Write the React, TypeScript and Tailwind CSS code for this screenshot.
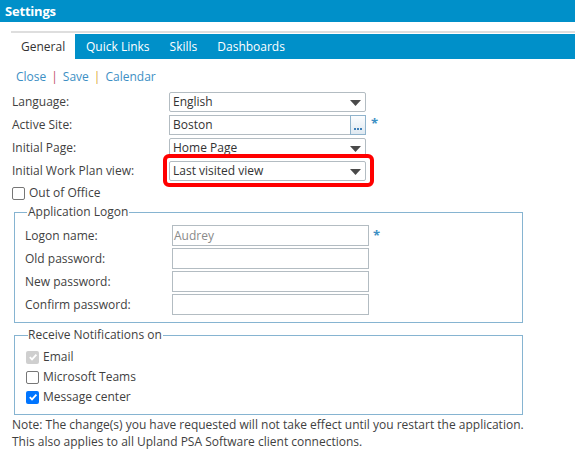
import React from "react";

const font = { fontFamily: '"Open Sans", "Noto Sans", sans-serif' };

function Arrow() {
  return (
    <svg width="11" height="6" viewBox="0 0 11 6" className="absolute right-[4px] top-[7px]">
      <polygon points="0,0 11,0 5.5,6" fill="#4a4a4a" />
    </svg>
  );
}

function Select({ value }: { value: string }) {
  return (
    <div className="relative w-[197px] h-[20px] border border-[#b3bcc2] rounded-[2px] bg-white pl-[3px] text-[12px] leading-[18px] text-[#333]">
      {value}
      <Arrow />
    </div>
  );
}

function TextBox({ value, gray }: { value?: string; gray?: boolean }) {
  return (
    <div className={`w-[197px] h-[21px] border border-[#b3bcc2] bg-white pl-[1px] text-[12px] leading-[19px] ${gray ? "text-[#8a8a8a]" : "text-[#333]"}`}>
      {value}
    </div>
  );
}

function Row({ label, children, labelW = 157 }: { label: string; children: React.ReactNode; labelW?: number }) {
  return (
    <div className="flex items-center">
      <div className="text-[12px] text-[#3f3f3f] shrink-0" style={{ width: labelW }}>
        {label}
      </div>
      {children}
    </div>
  );
}

function Box({ state }: { state: "off" | "on" | "disabled" }) {
  if (state === "off")
    return <span className="inline-block w-[13px] h-[13px] border border-[#767676] rounded-[2px] bg-white shrink-0" />;
  return (
    <span
      className={`inline-flex items-center justify-center w-[13px] h-[13px] rounded-[2px] shrink-0 ${
        state === "on" ? "bg-[#0075ff]" : "bg-[#cfcfcf]"
      }`}
    >
      <svg width="10" height="10" viewBox="0 0 10 10">
        <path d="M1.8 5.2 L4 7.4 L8.4 2.6" stroke="white" strokeWidth="1.8" fill="none" />
      </svg>
    </span>
  );
}

function Check({ state, label }: { state: "off" | "on" | "disabled"; label: string }) {
  return (
    <div className="flex items-center gap-[4px] h-[20px]">
      <Box state={state} />
      <span className="text-[12px] text-[#3f3f3f]">{label}</span>
    </div>
  );
}

export default function App() {
  return (
    <div className="w-[575px] h-[452px] bg-white relative overflow-hidden" style={font}>
      <div className="h-[22px] bg-[#0090c9] text-white font-bold text-[13px] leading-[22px] pl-[5px] tracking-[-0.2px]">
        Settings
      </div>
      <div className="mt-[9px] ml-[11px] h-[2px] bg-[#dedede]" />
      <div className="mt-[1px] flex h-[25px] ml-[11px]">
        <div className="w-[64px] bg-white text-[#333] text-[12px] leading-[25px] pl-[10px]">General</div>
        <div className="flex-1 bg-[#0090c9] flex text-white text-[12px] leading-[25px]">
          <span className="ml-[11px]">Quick Links</span>
          <span className="ml-[20px]">Skills</span>
          <span className="ml-[20px]">Dashboards</span>
        </div>
      </div>
      <div className="mt-[9px] ml-[16px] flex items-center gap-[5px] text-[12px] leading-[17px]">
        <span className="text-[#3d8fc4]">Close</span>
        <span className="text-[#c0506a]">|</span>
        <span className="text-[#3d8fc4]">Save</span>
        <span className="text-[#d9a43a]">|</span>
        <span className="text-[#3d8fc4]">Calendar</span>
      </div>
      <div className="ml-[12px] mt-[7px] flex flex-col gap-[3px]">
        <Row label="Language:">
          <Select value="English" />
        </Row>
        <Row label="Active Site:">
          <div className="flex items-center">
            <div className="w-[181px] h-[20px] border border-[#b3bcc2] border-r-0 bg-white pl-[3px] text-[12px] leading-[18px] text-[#333]">
              Boston
            </div>
            <div className="w-[16px] h-[20px] border border-[#8fb3cc] bg-gradient-to-b from-[#fbfdff] to-[#dfe9f1] flex items-end justify-center pb-[4px]">
              <svg width="8" height="2" viewBox="0 0 8 2">
                <rect x="0" y="0" width="2" height="2" fill="#3d7fb8" />
                <rect x="3" y="0" width="2" height="2" fill="#3d7fb8" />
                <rect x="6" y="0" width="2" height="2" fill="#3d7fb8" />
              </svg>
            </div>
            <span className="ml-[5px] text-[#3d8fc4] text-[13px] font-bold leading-[10px] self-start mt-[3px]">*</span>
          </div>
        </Row>
        <Row label="Initial Page:">
          <Select value="Home Page" />
        </Row>
        <Row label="Initial Work Plan view:">
          <Select value="Last visited view" />
        </Row>
      </div>
      <div className="ml-[12px] mt-[2px]">
        <Check state="off" label="Out of Office" />
      </div>

      <fieldset className="ml-[14px] w-[509px] border border-[#86b4d1] pl-[10px] pb-[7px] mt-[1px]">
        <legend className="text-[12px] text-[#3f3f3f] ml-[2px] pl-[1px] pr-[1px] leading-[16px]">Application Logon</legend>
        <div className="flex flex-col gap-[2px] mt-[5px]">
          <Row label="Logon name:" labelW={147}>
            <TextBox value="Audrey" gray />
            <span className="ml-[4px] text-[#3d8fc4] text-[13px] font-bold leading-[10px] self-start mt-[5px]">*</span>
          </Row>
          <Row label="Old password:" labelW={147}>
            <TextBox />
          </Row>
          <Row label="New password:" labelW={147}>
            <TextBox />
          </Row>
          <Row label="Confirm password:" labelW={147}>
            <TextBox />
          </Row>
        </div>
      </fieldset>

      <fieldset className="ml-[14px] w-[509px] border border-[#86b4d1] pl-[11px] pb-[7px] mt-[4px]">
        <legend className="text-[12px] text-[#3f3f3f] ml-[2px] pr-[1px] leading-[16px]">Receive Notifications on</legend>
        <div className="flex flex-col mt-[4px]">
          <Check state="disabled" label="Email" />
          <Check state="off" label="Microsoft Teams" />
          <Check state="on" label="Message center" />
        </div>
      </fieldset>

      <div className="ml-[12px] mt-[1px] text-[12px] leading-[17px] text-[#3f3f3f]">
        <div>Note: The change(s) you have requested will not take effect until you restart the application.</div>
        <div>This also applies to all Upland PSA Software client connections.</div>
      </div>

      <div className="absolute left-[163px] top-[154px] w-[211px] h-[33px] border-[4px] border-[#ff0000] rounded-[6px] pointer-events-none" />
    </div>
  );
}
